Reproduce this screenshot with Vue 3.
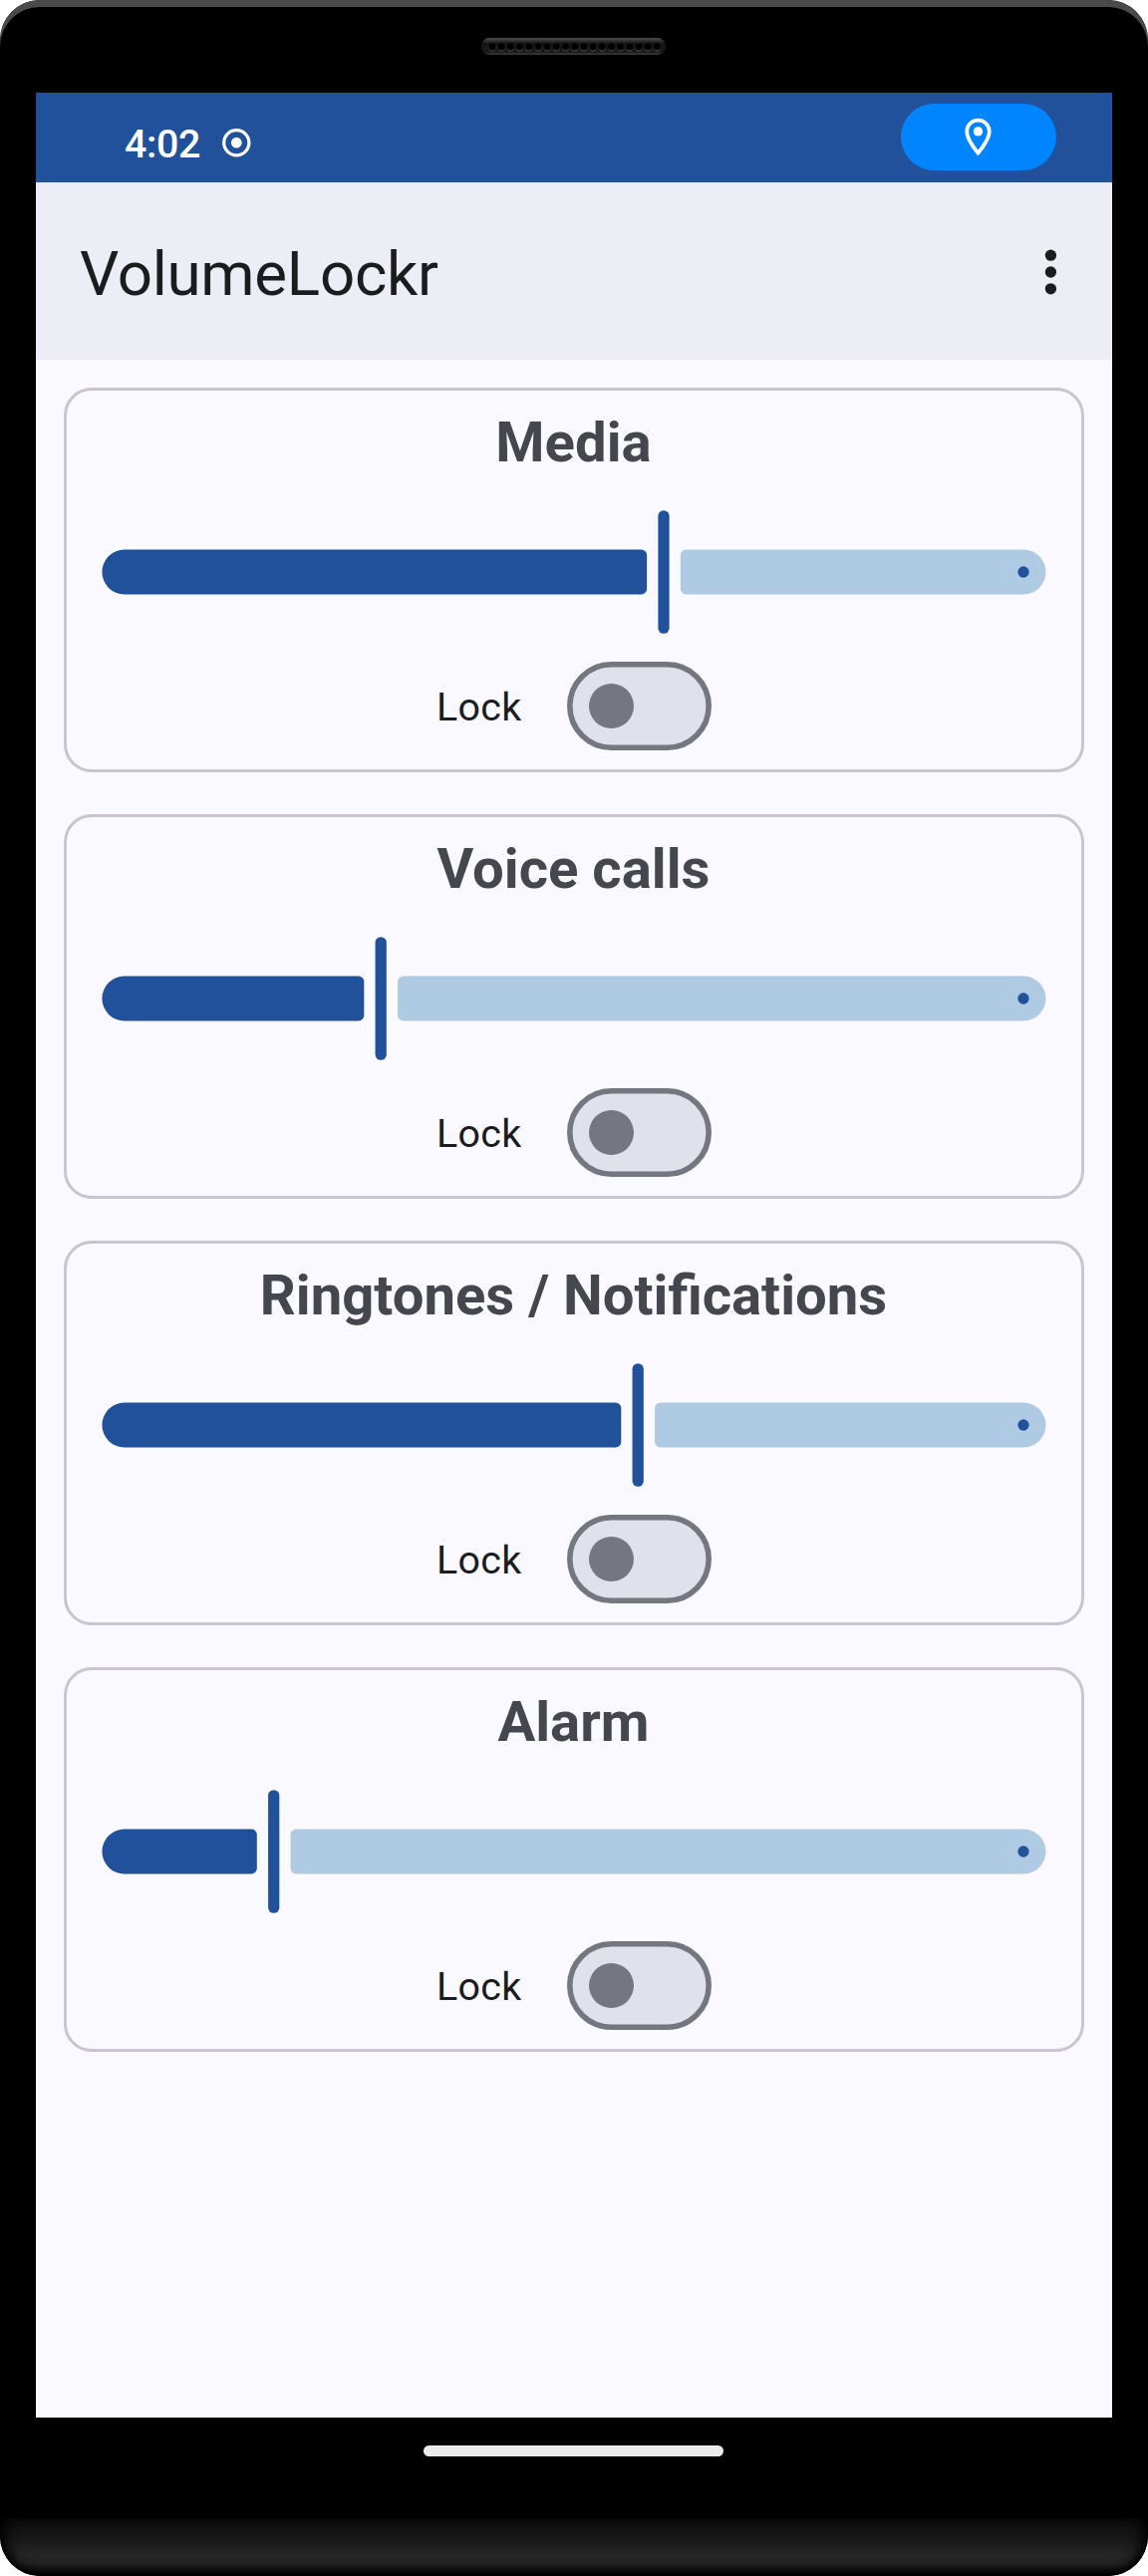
<script setup>
const START = 22.5
const RANGE = 903

const streams = [
  { name: 'Media', value: 9, max: 15 },
  { name: 'Voice calls', value: 2, max: 7 },
  { name: 'Ringtones / Notifications', value: 4, max: 7 },
  { name: 'Alarm', value: 1, max: 6 },
].map((s) => {
  const thumb = START + (RANGE * s.value) / s.max - 0.3
  return {
    ...s,
    handle: thumb - 5.625,
    active: activePath(thumb - 16.875),
    inactive: inactivePath(thumb + 16.875),
  }
})

// Track pieces: fully round on the outside, slightly rounded next to the handle
function activePath(end) {
  return `M22.9 39.5H${end - 5.6}a5.6 5.6 0 0 1 5.6 5.6V78.9a5.6 5.6 0 0 1 -5.6 5.6H22.9a22.5 22.5 0 0 1 0 -45z`
}
function inactivePath(start) {
  return `M925 39.5H${start + 5.6}a5.6 5.6 0 0 0 -5.6 5.6V78.9a5.6 5.6 0 0 0 5.6 5.6H925a22.5 22.5 0 0 0 0 -45z`
}
</script>

<template>
  <div class="phone">
    <div class="top-bezel">
      <svg class="speaker" width="185" height="17" viewBox="0 0 185 17">
        <defs>
          <linearGradient id="grille" x1="0" y1="0" x2="0" y2="1">
            <stop offset="0" stop-color="#4c4c4c" />
            <stop offset="0.22" stop-color="#2b2b2b" />
            <stop offset="0.3" stop-color="#161616" />
            <stop offset="0.8" stop-color="#161616" />
            <stop offset="1" stop-color="#3c3c3c" />
          </linearGradient>
        </defs>
        <rect width="185" height="17" rx="8.5" fill="url(#grille)" />
        <g v-for="n in 19" :key="n">
          <circle :cx="11 + (n - 1) * 9.19" cy="9.9" r="3.5" fill="#505050" />
          <circle :cx="11 + (n - 1) * 9.19" cy="9" r="3.5" fill="#000" />
        </g>
      </svg>
    </div>

    <div class="screen">
      <header class="status-bar">
        <span class="clock">4:02</span>
        <svg class="record" width="30" height="30" viewBox="0 0 30 30">
          <circle cx="15.3" cy="15.2" r="12.6" fill="none" stroke="#fff" stroke-width="3.2" />
          <circle cx="15.3" cy="15.2" r="5.4" fill="#fff" />
        </svg>
        <div class="location">
          <svg width="45" height="45" viewBox="0 0 24 24" fill="#fff">
            <path d="M12 2C8.13 2 5 5.13 5 9c0 5.25 7 13 7 13s7-7.75 7-13c0-3.87-3.13-7-7-7zM7 9c0-2.76 2.24-5 5-5s5 2.24 5 5c0 2.88-2.88 7.19-5 9.88C9.92 16.21 7 11.85 7 9z" />
            <circle cx="12" cy="9" r="2.5" />
          </svg>
        </div>
      </header>

      <div class="app-bar">
        <h1>VolumeLockr</h1>
        <svg class="menu" width="12" height="46" viewBox="0 0 12 46" fill="#1a1c1e">
          <circle cx="6.4" cy="6.2" r="5.65" />
          <circle cx="6.4" cy="23" r="5.65" />
          <circle cx="6.4" cy="39.8" r="5.65" />
        </svg>
      </div>

      <main>
        <section v-for="s in streams" :key="s.name" class="card">
          <h2>{{ s.name }}</h2>
          <svg class="slider" width="948" height="124" viewBox="0 0 948 124">
            <path :d="s.active" fill="#21519b" />
            <path :d="s.inactive" fill="#afcae3" />
            <rect :x="s.handle" y="0.2" width="11.25" height="123.6" rx="5.6" fill="#21519b" />
            <circle cx="925" cy="62" r="5.65" fill="#21519b" />
          </svg>
          <div class="lock-row">
            <span class="label">Lock</span>
            <svg width="145" height="89" viewBox="0 0 145 89">
              <rect x="2.8" y="2.8" width="139.4" height="83.4" rx="41.7" fill="#dfe2eb" stroke="#74777f" stroke-width="5.6" />
              <circle cx="44.5" cy="44.5" r="22.5" fill="#74777f" />
            </svg>
          </div>
        </section>
      </main>
    </div>

    <div class="nav-area"><div class="nav-pill"></div></div>
    <div class="chin"></div>
  </div>
</template>

<style>
body {
  margin: 0;
  background: #fff;
}
</style>

<style scoped>
.phone {
  width: 1152px;
  height: 2585px;
  display: flex;
  flex-direction: column;
  overflow: hidden;
  border-radius: 40px;
  background: #000;
  font-family: Roboto, "Liberation Sans", sans-serif;
}
.top-bezel {
  box-sizing: border-box;
  height: 93px;
  padding-top: 38px;
  flex: none;
  display: flex;
  align-items: flex-start;
  padding-left: 483px;
  border-radius: 40px 40px 0 0;
  box-shadow: inset 0 7px 0 #4a4a4a;
}
.screen {
  width: 1080px;
  height: 2333px;
  flex: none;
  margin: 0 36px;
  background: #faf9ff;
}
.status-bar {
  box-sizing: border-box;
  display: flex;
  align-items: center;
  height: 90px;
  padding: 0 56px 0 89px;
  background: #21519b;
}
.clock {
  width: 97px;
  padding-top: 13px;
  font-size: 39.375px;
  font-weight: 500;
  line-height: 46px;
  letter-spacing: -0.35px;
  color: #fff;
}
.record {
  margin-top: 10px;
}
.location {
  display: flex;
  align-items: center;
  justify-content: center;
  width: 156px;
  height: 67px;
  margin: 0 0 2px auto;
  border-radius: 34px;
  background: #0085ff;
}
.location svg {
  margin-right: 1px;
}
.app-bar {
  box-sizing: border-box;
  display: flex;
  align-items: center;
  justify-content: space-between;
  height: 178px;
  padding: 0 56px 0 44px;
  background: #ededf5;
}
.menu {
  margin-top: 1px;
}
h1 {
  margin: 0;
  padding-top: 6px;
  font-size: 61.875px;
  font-weight: 400;
  line-height: 80px;
  letter-spacing: -0.27px;
  color: #1a1c1e;
}
main {
  display: flex;
  flex-direction: column;
  gap: 42px;
  padding: 28px;
}
.card {
  box-sizing: border-box;
  display: flex;
  flex-direction: column;
  height: 386px;
  border: 3px solid #c9c4d0;
  border-radius: 28px;
}
h2 {
  margin: 0 0 16px;
  padding-right: 1px;
  font-size: 56.25px;
  font-weight: 700;
  font-variant-ligatures: common-ligatures;
  line-height: 104px;
  letter-spacing: 0;
  text-align: center;
  color: #44474e;
}
.slider {
  flex: none;
  margin-left: 35px;
}
.lock-row {
  display: flex;
  align-items: center;
  height: 89px;
  margin-top: 28px;
  padding-left: 371px;
}
.label {
  width: 131px;
  padding-top: 2px;
  font-size: 39.375px;
  line-height: 46px;
  letter-spacing: 0.3px;
  color: #1a1c1e;
}
.nav-area {
  display: flex;
  justify-content: center;
  align-items: flex-start;
  box-sizing: border-box;
  height: 101px;
  padding: 28px 1px 0 0;
  flex: none;
}
.nav-pill {
  width: 301px;
  height: 11px;
  border-radius: 6px;
  background: #ebebeb;
}
.chin {
  height: 58px;
  flex: none;
  border-radius: 0 0 40px 40px;
  background: linear-gradient(#0b0b0b, #1a1a1a 40%, #262626 64%, #222 78%, #0c0c0c 94%, #000);
  box-shadow: inset 12px 0 14px -6px #000, inset -12px 0 14px -6px #000, inset 0 -4px 6px -2px #000;
}
</style>
